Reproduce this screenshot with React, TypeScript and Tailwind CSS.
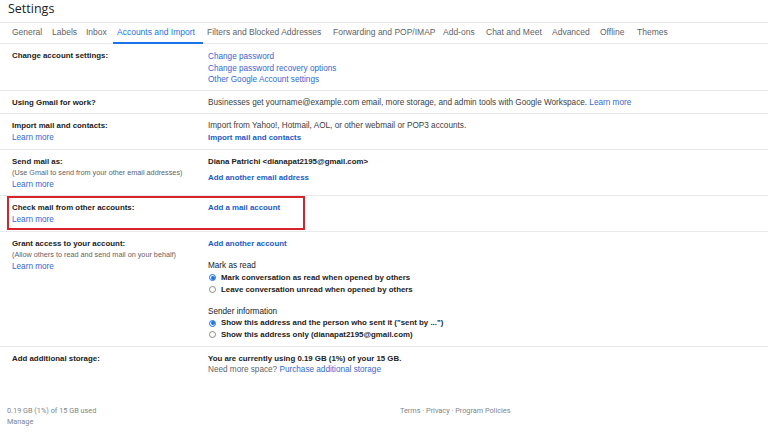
import React from "react";

const tabs: { label: string; w: string; active?: boolean }[] = [
  { label: "General", w: "w-[40px]" },
  { label: "Labels", w: "w-[34px]" },
  { label: "Inbox", w: "w-[31px]" },
  { label: "Accounts and Import", w: "w-[90px]", active: true },
  { label: "Filters and Blocked Addresses", w: "w-[126px]" },
  { label: "Forwarding and POP/IMAP", w: "w-[110px]" },
  { label: "Add-ons", w: "w-[43px]" },
  { label: "Chat and Meet", w: "w-[66px]" },
  { label: "Advanced", w: "w-[48px]" },
  { label: "Offline", w: "w-[37px]" },
  { label: "Themes", w: "w-[40px]" },
];

function Radio({ checked, label }: { checked?: boolean; label: string }) {
  return (
    <div className="flex items-center">
      {checked ? (
        <span className="ml-[1px] mr-[5px] flex h-[7px] w-[7px] items-center justify-center rounded-full border border-[#1a73e8] bg-white">
          <span className="h-[4px] w-[4px] rounded-full bg-[#1a73e8]" />
        </span>
      ) : (
        <span className="ml-[1px] mr-[5px] h-[7px] w-[7px] rounded-full border border-[#8a8a8a] bg-white" />
      )}
      <span className="text-[7.875px] font-bold text-[#222]">{label}</span>
    </div>
  );
}

function Row({
  left,
  right,
  last,
  children,
}: {
  left: React.ReactNode;
  right: React.ReactNode;
  last?: boolean;
  children?: React.ReactNode;
}) {
  return (
    <div
      className={
        "relative flex pt-[6px] pb-[5px] pl-[12px] " +
        (last ? "" : "border-b border-[#e8eaed]")
      }
    >
      <div className="w-[196px] shrink-0">{left}</div>
      <div className="flex-1">{right}</div>
      {children}
    </div>
  );
}

const Label = ({ children }: { children: React.ReactNode }) => (
  <div className="text-[7.875px] font-bold text-[#222]">{children}</div>
);
const Desc = ({ children }: { children: React.ReactNode }) => (
  <div className="text-[7.25px] text-[#5f6368]">{children}</div>
);
const Link = ({ children }: { children: React.ReactNode }) => (
  <div className="text-[#3367d6]">{children}</div>
);
const BoldLink = ({ children }: { children: React.ReactNode }) => (
  <div className="text-[7.875px] font-bold text-[#1a5acb]">{children}</div>
);

export default function App() {
  return (
    <div className="relative h-[432px] w-[768px] overflow-hidden bg-white font-['Liberation_Sans',Arial,sans-serif] text-[8.2px] leading-[11.6px] text-[#3c4043]">
      <div className="h-[22px] pl-[8px] pt-[1px] font-['Open_Sans',sans-serif] text-[12.5px] leading-[16px] text-[#202124]">
        Settings
      </div>
      <div className="flex h-[22px] border-y border-[#e8eaed] pl-[8px] text-[8.5px]">
        {tabs.map((t) => (
          <div
            key={t.label}
            className={
              t.w +
              " -mb-[1px] flex h-[21px] shrink-0 items-center whitespace-nowrap pl-[4px] " +
              (t.active
                ? "border-b-2 border-[#1a73e8] text-[#1a73e8]"
                : "border-b-2 border-transparent text-[#5f6368]")
            }
          >
            {t.label}
          </div>
        ))}
      </div>

      <Row
        left={<Label>Change account settings:</Label>}
        right={
          <div className="-mb-[1px] pt-[1px]">
            <Link>Change password</Link>
            <Link>Change password recovery options</Link>
            <Link>Other Google Account settings</Link>
          </div>
        }
      />
      <Row
        left={<Label>Using Gmail for work?</Label>}
        right={
          <div className="whitespace-nowrap">
            Businesses get yourname@example.com email, more storage, and admin tools with Google Workspace.{" "}
            <span className="text-[#3367d6]">Learn more</span>
          </div>
        }
      />
      <Row
        left={
          <>
            <Label>Import mail and contacts:</Label>
            <Link>Learn more</Link>
          </>
        }
        right={
          <>
            <div>Import from Yahoo!, Hotmail, AOL, or other webmail or POP3 accounts.</div>
            <BoldLink>Import mail and contacts</BoldLink>
          </>
        }
      />
      <Row
        left={
          <>
            <Label>Send mail as:</Label>
            <Desc>(Use Gmail to send from your other email addresses)</Desc>
            <Link>Learn more</Link>
          </>
        }
        right={
          <>
            <div className="text-[7.875px] font-bold text-[#222]">Diana Patrichi &lt;dianapat2195@gmail.com&gt;</div>
            <div className="mt-[5px]">
              <BoldLink>Add another email address</BoldLink>
            </div>
          </>
        }
      />
      <Row
        left={
          <>
            <Label>Check mail from other accounts:</Label>
            <Link>Learn more</Link>
          </>
        }
        right={<BoldLink>Add a mail account</BoldLink>}
      >
        <div className="pointer-events-none absolute left-[7px] top-0 h-[34px] w-[298px] border-2 border-[#d8232c]" />
      </Row>
      <Row
        left={
          <>
            <Label>Grant access to your account:</Label>
            <Desc>(Allow others to read and send mail on your behalf)</Desc>
            <Link>Learn more</Link>
          </>
        }
        right={
          <>
            <BoldLink>Add another account</BoldLink>
            <div className="mt-[11px] text-[#202124]">Mark as read</div>
            <div className="leading-[12px]">
              <Radio checked label="Mark conversation as read when opened by others" />
              <Radio label="Leave conversation unread when opened by others" />
            </div>
            <div className="mt-[10px] text-[#202124]">Sender information</div>
            <Radio checked label={'Show this address and the person who sent it ("sent by ...")'} />
            <Radio label="Show this address only (dianapat2195@gmail.com)" />
          </>
        }
      />
      <Row
        last
        left={<Label>Add additional storage:</Label>}
        right={
          <>
            <div className="text-[7.875px] font-bold text-[#222]">You are currently using 0.19 GB (1%) of your 15 GB.</div>
            <div className="text-[#5f6368]">
              Need more space? <span className="text-[#3367d6]">Purchase additional storage</span>
            </div>
          </>
        }
      />

      <div className="mt-[24px] flex pl-[7px] font-['Roboto',sans-serif] text-[7.3px] leading-[11.5px] text-[#80868b]">
        <div className="w-[393px] shrink-0">
          <div>0.19 GB (1%) of 15 GB used</div>
          <div>Manage</div>
        </div>
        <div>Terms · Privacy · Program Policies</div>
      </div>
    </div>
  );
}
